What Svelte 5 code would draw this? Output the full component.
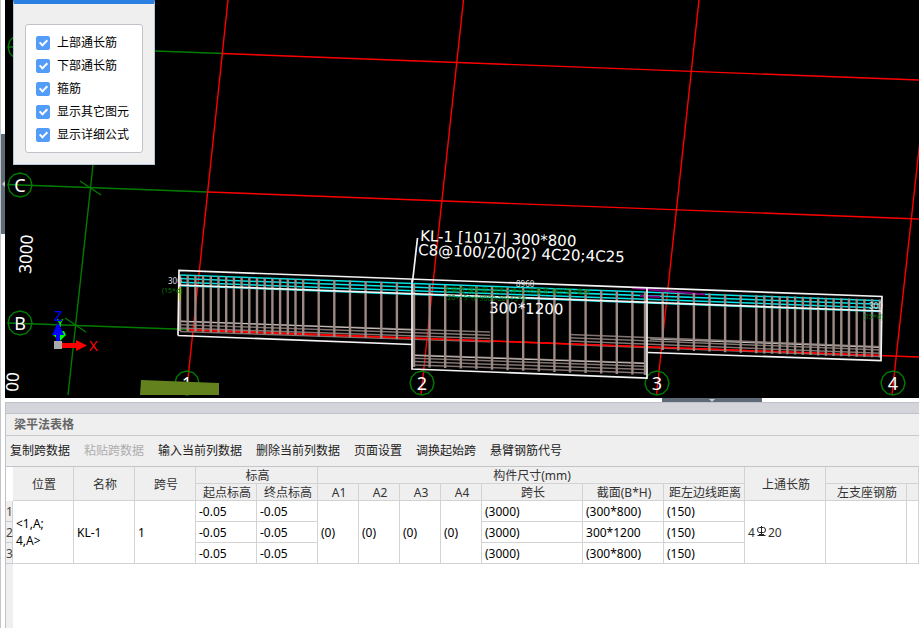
<script lang="ts">
	type Point = [number, number];

	interface Span {
		start: string;
		end: string;
		length: string;
		section: string;
		offset: string;
	}

	let showTop = $state(true);
	let showBottom = $state(true);
	let showStirrups = $state(true);
	let showOthers = $state(true);
	let showFormula = $state(true);

	const actions = [
		{ label: '复制跨数据' },
		{ label: '粘贴跨数据', disabled: true },
		{ label: '输入当前列数据' },
		{ label: '删除当前列数据' },
		{ label: '页面设置' },
		{ label: '调换起始跨' },
		{ label: '悬臂钢筋代号' }
	];

	const subHeads = ['起点标高', '终点标高', 'A1', 'A2', 'A3', 'A4', '跨长', '截面(B*H)', '距左边线距离', '左支座钢筋', ''];

	const spans: Span[] = [
		{ start: '-0.05', end: '-0.05', length: '(3000)', section: '(300*800)', offset: '(150)' },
		{ start: '-0.05', end: '-0.05', length: '(3000)', section: '300*1200', offset: '(150)' },
		{ start: '-0.05', end: '-0.05', length: '(3000)', section: '(300*800)', offset: '(150)' }
	];

	const bubbles = [
		{ x: 20, y: 47, name: '' },
		{ x: 20, y: 185, name: 'C' },
		{ x: 20, y: 323, name: 'B' },
		{ x: 187, y: 383, name: '1' },
		{ x: 422, y: 383, name: '2' },
		{ x: 657, y: 383, name: '3' },
		{ x: 893, y: 383, name: '4' }
	];

	function ring(x: number, y: number) {
		return Array.from({ length: 12 }, (_, i) => {
			const a = (i * Math.PI) / 6;
			return `${(x + 12 * Math.cos(a)).toFixed(1)},${(y + 12 * Math.sin(a)).toFixed(1)}`;
		}).join(' ');
	}

	// four parallel bars between two points
	function bars(from: Point, to: Point, gap = 3.3) {
		return [0, 1, 2, 3]
			.map((i) => `M${from[0]} ${from[1] + i * gap}L${to[0]} ${to[1] + i * gap}`)
			.join('');
	}

	// evenly spaced vertical ties, following the slope of the beam
	function ties(x: number, step: number, count: number, top: number, height: number) {
		let d = '';
		for (let i = 0; i < count; i++) {
			const px = x + i * step;
			const py = top + i * step * 0.035;
			d += `M${px.toFixed(1)} ${py.toFixed(1)}v${height}`;
		}
		return d;
	}

	const stirrups =
		ties(180, 7.7, 17, 275, 56) +
		ties(318.7, 15.65, 6, 279.5, 57) +
		ties(414, 15.6, 15, 284, 83) +
		ties(645, 1, 1, 292, 83) +
		ties(662.7, 15.6, 7, 292, 58) +
		ties(764.3, 7.7, 16, 295.5, 58);
</script>

<main>
	<aside>
		<button class="grip side" aria-label="收起左侧面板"></button>
	</aside>

	<div class="work">
		<section class="viewport">
			<svg class="scene" viewBox="5 0 914 398" role="img" aria-label="梁钢筋三维">
				<g class="axis">
					<path d="M155 51L223 53.5M8 184.500L208 192M8 323L189 329.500M93 165L68 395" />
					<path d="M80 181L101 195M65 318L86 332M8 47h14" />
				</g>
				<g class="grid-line">
					<path d="M223 53.5L919 80M208 192L919 219M189 329.500L919 357" />
					<path d="M228 0L188 378M463.500 0L421 395M699 0L656.500 395M920 140L892 395" />
				</g>
				{#each bubbles as b}
					<polygon class="axis" points={ring(b.x, b.y)} />
					<text class="bubble" x={b.x} y={b.y + 7}>{b.name}</text>
				{/each}
				<path d="M141 380L219 383V395H140Z" fill="#63821d" />

				{#if showTop}
					<path class="top-bar" d={bars([180, 275], [881, 300.7], 3.6)} />
					<path d="M632 288L705 294.500M640 296L660 297" stroke="#80007f" stroke-width="2" />
				{/if}
				{#if showBottom}
					<path class="bottom-bar" d={bars([180, 321.5], [490, 331.9])} />
					<path class="bottom-bar" d={bars([569, 334.5], [881, 346.7])} />
					<path class="bottom-bar" d={bars([414, 355], [646, 363])} />
					<path class="bottom-light" d="M180 321L412 330M414 355.500L646 363.500M650 339L881 347.500" />
					<path d="M189 330L881 355.500" stroke="#f00" stroke-width="1.5" />
				{/if}
				{#if showStirrups}
					<path class="tie" d={stirrups} />
				{/if}
				{#if showOthers}
					<g class="outline">
						<path d="M178 335.500L179 270.500L882 296.500L881 360.500L648 352.500M178 335.500L412 344.500" />
						<path d="M179 285L881 311M412 279.500V369L647 378V288" />
						<path d="M417.500 238L412.500 282" />
					</g>
				{/if}

				<path d="M180 287v14" stroke="#a6b02a" stroke-width="2" />
				<g class="note">
					<text transform="translate(420 241) rotate(2)">KL-1 [1017| 300*800</text>
					<text transform="translate(418 255) rotate(2)">C8@100/200(2) 4C20;4C25</text>
					<text transform="translate(489 313) rotate(1)">300*1200</text>
				</g>
				{#if showFormula}
					<g class="tiny">
						<text x="168" y="284">300</text>
						<text x="516" y="287">8960</text>
						<text x="869" y="309">300</text>
					</g>
					<g class="formula">
						<text x="162" y="293">(15*d)</text>
						<text x="863" y="319">(15*d)</text>
						<text transform="translate(444 292) rotate(1)">支座宽-保护层+弯折+净长+支座宽-保护层+弯折</text>
						<text transform="translate(445 300) rotate(1)">-20+15*d+9000-20+15*d</text>
					</g>
				{/if}
				<text class="dimension" transform="translate(31 274) rotate(-87)">3000</text>
				<text class="dimension" transform="translate(18 392) rotate(-87)">00</text>

				<g>
					<path d="M60 341L53 335L56 331H64L66 335Z" fill="#0f0" />
					<text x="57" y="327" fill="#0f0" font-size="11">Y</text>
					<path d="M56 343V335H52L58 322L64 335H60V343Z" fill="#00f" />
					<path d="M61 343H76V340L87 345.500L76 351V348H61Z" fill="#f00" />
					<path d="M54 341h8v8h-8z" fill="#aaa" />
					<text x="54" y="321" fill="#00f" font-size="15">Z</text>
					<text x="89" y="351" fill="#f00" font-size="15">X</text>
				</g>
			</svg>

			<form class="panel">
				<div class="options">
					<label><input type="checkbox" bind:checked={showTop} />上部通长筋</label>
					<label><input type="checkbox" bind:checked={showBottom} />下部通长筋</label>
					<label><input type="checkbox" bind:checked={showStirrups} />箍筋</label>
					<label><input type="checkbox" bind:checked={showOthers} />显示其它图元</label>
					<label><input type="checkbox" bind:checked={showFormula} />显示详细公式</label>
				</div>
			</form>
		</section>

		<div class="splitter">
			<button class="grip bottom" aria-label="收起表格"></button>
		</div>

		<section class="dock">
			<div class="dock-bar"></div>
			<h2>梁平法表格</h2>
			<div class="toolbar">
				{#each actions as action}
					<button disabled={action.disabled}>{action.label}</button>
				{/each}
			</div>
			<div class="sheet">
				<table>
					<colgroup>
						<col class="w-index" />
						<col class="w-first" /><col class="w-mid" /><col class="w-mid" />
						<col class="w-mid" /><col class="w-mid" />
						<col class="w-small" /><col class="w-small" /><col class="w-small" /><col class="w-small" />
						<col class="w-length" />
						<col class="w-large" /><col class="w-large" /><col class="w-large" /><col class="w-large" />
						<col />
					</colgroup>
					<thead>
						<tr>
							<td class="corner" rowspan="2"></td>
							<th rowspan="2">位置</th>
							<th rowspan="2">名称</th>
							<th rowspan="2">跨号</th>
							<th colspan="2">标高</th>
							<th colspan="7">构件尺寸(mm)</th>
							<th rowspan="2">上通长筋</th>
							<th colspan="2"></th>
						</tr>
						<tr>
							{#each subHeads as head}
								<th>{head}</th>
							{/each}
						</tr>
					</thead>
					<tbody>
						{#each spans as span, i}
							<tr>
								<th class="index" scope="row">{i + 1}</th>
								{#if i === 0}
									<td rowspan="3">&lt;1,A;<br />4,A&gt;</td>
									<td rowspan="3">KL-1</td>
									<td rowspan="3">1</td>
								{/if}
								<td>{span.start}</td>
								<td>{span.end}</td>
								{#if i === 0}
									{#each [1, 2, 3, 4] as _}
										<td rowspan="3">(0)</td>
									{/each}
								{/if}
								<td>{span.length}</td>
								<td>{span.section}</td>
								<td>{span.offset}</td>
								{#if i === 0}
									<td class="rebar" rowspan="3">
										4<svg viewBox="0 0 11 11" role="img" aria-label="三级钢">
											<path d="M5.500 0V10M3.500 1.500H7.500Q9.500 1.500 9.500 4T7.500 6.500H3.500Q1.500 6.500 1.500 4T3.500 1.500M1.500 9.500H9.500M3 8.500H8" />
										</svg>20
									</td>
									<td rowspan="3"></td>
									<td rowspan="3"></td>
								{/if}
							</tr>
						{/each}
					</tbody>
				</table>
			</div>
		</section>
	</div>
</main>

<style>
	:global(body) {
		margin: 0;
	}

	main {
		display: grid;
		grid-template-columns: 5px minmax(0, 1fr);
		min-height: 100vh;
		overflow: hidden;
		background: #fff;
		color: #222;
		font: 12px/16px 'Noto Sans', 'Noto Sans CJK SC', sans-serif;
	}

	aside {
		box-sizing: border-box;
		border-left: 1px solid #c3c5ca;
	}

	button {
		border: 0;
		padding: 0;
		background: none;
		color: inherit;
		font: inherit;
	}

	.grip {
		display: flex;
		align-items: center;
		justify-content: center;
		background: #5f6b76;
	}

	.grip::before {
		content: '';
		border: 3px solid transparent;
	}

	.side {
		width: 4px;
		height: 100px;
		margin-top: 134px;
	}

	.side::before {
		border-left: 0;
		border-right-color: #c4cad0;
	}

	.bottom {
		width: 100px;
		height: 4px;
		margin-right: 157px;
	}

	.bottom::before {
		border-bottom: 0;
		border-top-color: #c4cad0;
	}

	.work {
		display: flex;
		flex-direction: column;
	}

	.viewport {
		position: relative;
		background: #000;
	}

	.scene {
		display: block;
		width: 100%;
		height: auto;
		fill: none;
	}

	.axis {
		stroke: #007d00;
		stroke-width: 1.4;
	}

	.grid-line {
		stroke: #f00;
		stroke-width: 1.4;
	}

	.bubble {
		fill: #fff;
		font-size: 18px;
		text-anchor: middle;
	}

	.top-bar {
		stroke: #00e5e8;
		stroke-width: 1.5;
	}

	.bottom-bar {
		stroke: #81736f;
		stroke-width: 1.5;
	}

	.bottom-light {
		stroke: #c9c3c1;
	}

	.tie {
		stroke: #9b8983;
		stroke-width: 2.4;
	}

	.outline {
		stroke: #f4f4f4;
		stroke-width: 1.7;
	}

	.note {
		fill: #fff;
		font: 15px 'DejaVu Sans', sans-serif;
	}

	.tiny {
		fill: #ddd;
		font-size: 8px;
	}

	.formula {
		fill: #007a00;
		font-size: 7px;
	}

	.dimension {
		fill: #fff;
		font-size: 17px;
	}

	.panel {
		position: absolute;
		top: 0;
		left: 8px;
		padding: 20px 11px 11px;
		border: 1px solid #b5c7db;
		border-top: 4px solid #2b7fe0;
		background: #efefef;
	}

	.options {
		padding: 6px 13px 6px 10px;
		border: 1px solid #c1c3ca;
		border-radius: 3px;
		background: #fff;
		color: #000;
	}

	label {
		display: flex;
		align-items: center;
		gap: 7px;
		height: 23px;
	}

	input {
		appearance: none;
		display: flex;
		justify-content: center;
		width: 14px;
		height: 14px;
		margin: 0;
		border: 1px solid #539cf8;
		border-radius: 2px;
	}

	input:checked {
		background: #539cf8;
	}

	input:checked::before {
		content: '';
		width: 3px;
		height: 6px;
		margin-top: 1px;
		border: solid #fff;
		border-width: 0 2px 2px 0;
		transform: rotate(45deg);
	}

	.splitter {
		display: flex;
		justify-content: flex-end;
		height: 4px;
	}

	.dock {
		display: flex;
		flex: 1;
		flex-direction: column;
		border-left: 1px solid #bfc2c8;
		background: #efefef;
	}

	.dock-bar {
		height: 10px;
		border: solid #bfc2c8;
		border-width: 1px 0;
		background: #d4d5db;
	}

	h2 {
		margin: 0;
		padding: 2px 8px;
		border-bottom: 1px solid #c7c9cd;
		color: #666;
		font-size: 12px;
		font-weight: 700;
		line-height: 17px;
	}

	.toolbar {
		display: flex;
		align-items: center;
		gap: 14px;
		height: 30px;
		padding-left: 4px;
		border-bottom: 1px solid #c3c5c9;
		white-space: nowrap;
	}

	.toolbar button:disabled {
		color: #adadad;
	}

	.sheet {
		flex: 1;
		background: linear-gradient(to right, #efefef 7px, #fff 7px);
	}

	table {
		width: 100%;
		table-layout: fixed;
		border-spacing: 0;
	}

	.w-index {
		width: 7px;
	}

	.w-first,
	.w-mid {
		width: 61px;
	}

	.w-small {
		width: 41px;
	}

	.w-length {
		width: 101px;
	}

	.w-large {
		width: 81px;
	}

	th,
	td {
		box-sizing: border-box;
		height: 21px;
		padding: 0 3px;
		border: solid #d3d3d3;
		border-width: 0 1px 1px 0;
		background: #fff;
		color: #000;
		line-height: 17px;
		text-align: left;
		white-space: nowrap;
	}

	thead th {
		height: 17px;
		padding: 1px 0 0 2px;
		background: #efefef;
		color: #333;
		font-weight: 400;
		line-height: 15px;
		text-align: center;
	}

	td.corner {
		border: 0;
	}

	.index {
		padding: 0;
		border-bottom-color: #c8cbd0;
		background: #efefef;
		color: #444;
		font-weight: 400;
	}

	td.rebar {
		color: #333;
	}

	.rebar svg {
		width: 11px;
		height: 11px;
		margin: 0 1px;
		fill: none;
		stroke: #222;
	}
</style>
